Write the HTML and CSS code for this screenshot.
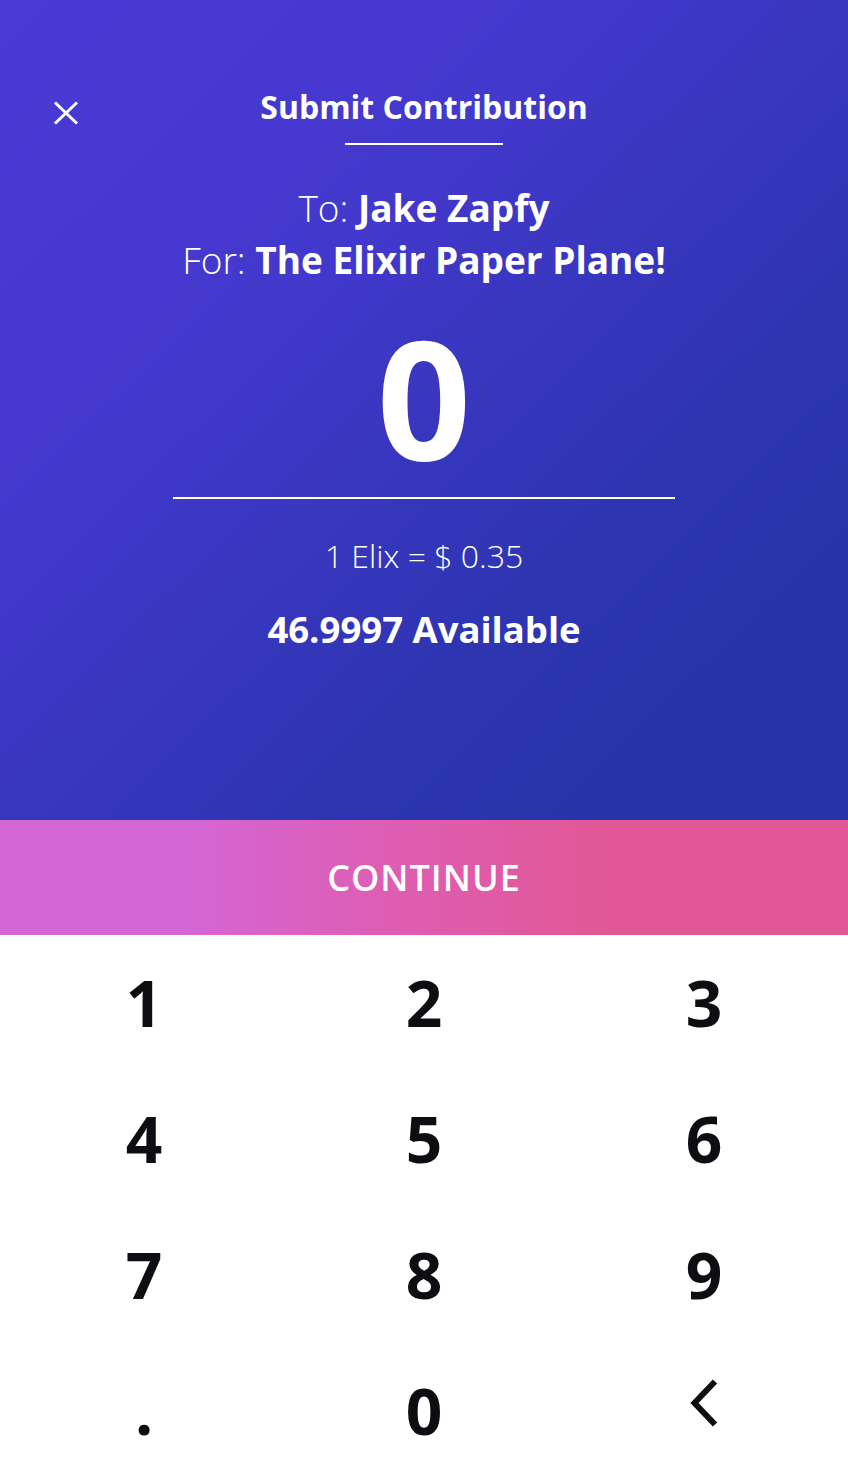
FILE: index.html
```html
<!DOCTYPE html>
<html lang="en">
<head>
<meta charset="utf-8">
<title>Submit Contribution</title>
<link rel="stylesheet" href="styles.css">
</head>
<body>
<div class="screen">
  <section class="hero">
    <header class="header">
      <button class="close" aria-label="Close">
        <svg width="26" height="24" viewBox="0 0 26 24"><path d="M2 1.5 L24 22.5 M24 1.5 L2 22.5" stroke="#fff" stroke-width="3" fill="none"/></svg>
      </button>
      <h1 class="title">Submit Contribution</h1>
      <span class="spacer"></span>
    </header>
    <div class="title-rule"></div>
    <div class="recipient">
      <p class="line">To: <strong>Jake Zapfy</strong></p>
      <p class="line">For: <strong>The Elixir Paper Plane!</strong></p>
    </div>
    <div class="amount">0</div>
    <div class="amount-rule"></div>
    <p class="rate">1 Elix = $ 0.35</p>
    <p class="available">46.9997 Available</p>
  </section>
  <button class="continue">CONTINUE</button>
  <section class="keypad">
    <button class="key">1</button>
    <button class="key">2</button>
    <button class="key">3</button>
    <button class="key">4</button>
    <button class="key">5</button>
    <button class="key">6</button>
    <button class="key">7</button>
    <button class="key">8</button>
    <button class="key">9</button>
    <button class="key">.</button>
    <button class="key">0</button>
    <button class="key key-back" aria-label="Backspace">
      <svg width="30" height="50" viewBox="0 0 30 50"><path d="M26 3.5 L5.5 25 L26 46.5" stroke="#0e0e12" stroke-width="6" fill="none" stroke-linejoin="miter"/></svg>
    </button>
  </section>
</div>
</body>
</html>
```
FILE: styles.css
```css
* { box-sizing: border-box; }
html, body { margin: 0; padding: 0; }
body {
  font-family: "Open Sans", "Noto Sans", sans-serif;
  background: #fff;
  width: 848px;
  height: 1482px;
  overflow: hidden;
}
button {
  font-family: inherit;
  border: 0;
  background: none;
  padding: 0;
  margin: 0;
  cursor: pointer;
}
p, h1 { margin: 0; }

.screen {
  display: flex;
  flex-direction: column;
  width: 848px;
  height: 1482px;
}

.hero {
  height: 820px;
  flex: none;
  display: flex;
  flex-direction: column;
  align-items: center;
  color: #fff;
  padding-top: 87px;
  background: linear-gradient(to bottom right, #4a3ad6 0%, #4338cc 35%, #2e35b2 66%, #2834ab 85%);
}

.header {
  width: 100%;
  display: grid;
  grid-template-columns: 1fr auto 1fr;
  align-items: start;
}
.close {
  justify-self: start;
  margin-left: 53px;
  margin-top: 14px;
  width: 26px;
  height: 24px;
  display: block;
}
.close svg { display: block; }
.title {
  font-size: 32px;
  line-height: 40px;
  font-weight: 700;
  color: #fff;
}
.title-rule {
  width: 158px;
  height: 2px;
  background: #fff;
  margin-top: 16px;
}

.recipient {
  margin-top: 37px;
  text-align: center;
}
.line {
  font-size: 37px;
  line-height: 52px;
  font-weight: 300;
}
.line strong { font-weight: 700; }

.amount {
  margin-top: 20px;
  font-size: 165px;
  line-height: 180px;
  font-weight: 700;
}
.amount-rule {
  margin-top: 11px;
  width: 502px;
  height: 2px;
  background: #fff;
}
.rate {
  margin-top: 37px;
  font-size: 32px;
  line-height: 40px;
  font-weight: 300;
}
.available {
  margin-top: 31px;
  font-size: 36.5px;
  line-height: 44px;
  font-weight: 700;
}

.continue {
  height: 115px;
  flex: none;
  width: 100%;
  display: flex;
  align-items: center;
  justify-content: center;
  color: #fff;
  font-size: 36px;
  font-weight: 600;
  letter-spacing: 1px;
  background: linear-gradient(to right, #d466d4 0%, #d466d4 22%, #de5db0 48%, #e25896 72%, #e25896 100%);
}

.keypad {
  flex: 1;
  display: grid;
  grid-template-columns: repeat(3, 1fr);
  grid-template-rows: repeat(4, 136px);
  padding: 0 4px;
}
.key {
  display: flex;
  align-items: center;
  justify-content: center;
  font-size: 64px;
  line-height: 64px;
  font-weight: 700;
  color: #0e0e12;
}
.key-back svg {
  display: block;
  margin-bottom: 16px;
}
```
